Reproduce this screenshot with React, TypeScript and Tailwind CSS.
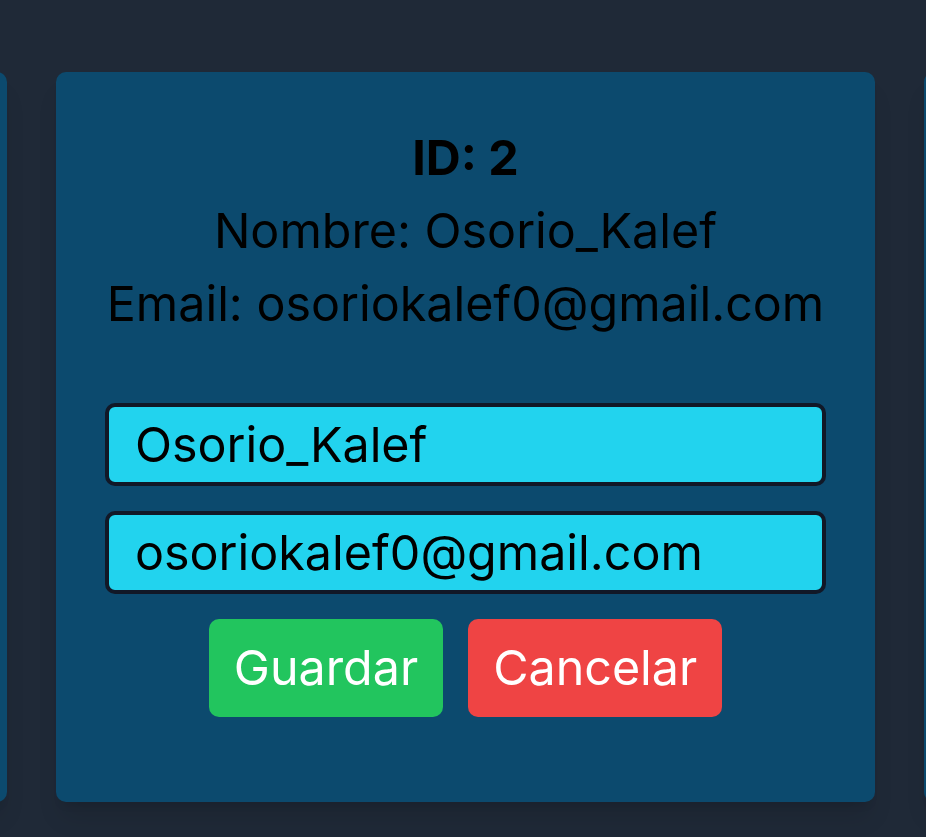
import React, { useState } from 'react';

interface User {
  id: number;
  nombre: string;
  email: string;
}

const users: User[] = [
  { id: 1, nombre: 'Perez_Ana', email: 'perezana1@gmail.com' },
  { id: 2, nombre: 'Osorio_Kalef', email: 'osoriokalef0@gmail.com' },
  { id: 3, nombre: 'Lopez_Marta', email: 'lopezmarta3@gmail.com' },
];

const UserCard: React.FC<{ user: User; editing?: boolean }> = ({ user, editing }) => {
  const [nombre, setNombre] = useState(user.nombre);
  const [email, setEmail] = useState(user.email);

  return (
    <div className="w-[819px] h-[730px] shrink-0 rounded-[10px] bg-[#0c4a6e] shadow-xl px-[49px] pt-[49px] text-center text-black">
      <p className="whitespace-nowrap text-[48.4px] leading-[73px] font-bold">ID: {user.id}</p>
      <p className="whitespace-nowrap text-[48.4px] leading-[73px]">Nombre: {user.nombre}</p>
      <p className="whitespace-nowrap text-[48.4px] leading-[73px]">Email: {user.email}</p>
      {editing && (
        <div className="mt-[63px] flex flex-col gap-[25px]">
          <input
            value={nombre}
            onChange={e => setNombre(e.target.value)}
            className="h-[83px] w-full rounded-[10px] border-[4px] border-[#111827] bg-[#22d3ee] px-[26px] text-[48.4px] text-black outline-none"
          />
          <input
            value={email}
            onChange={e => setEmail(e.target.value)}
            className="h-[83px] w-full rounded-[10px] border-[4px] border-[#111827] bg-[#22d3ee] px-[26px] text-[48.4px] text-black outline-none"
          />
          <div className="flex justify-center gap-[25px]">
            <button className="h-[98px] rounded-[10px] bg-[#22c55e] px-[25px] text-[48.4px] text-white">Guardar</button>
            <button className="h-[98px] rounded-[10px] bg-[#ef4444] px-[25px] text-[48.4px] text-white">Cancelar</button>
          </div>
        </div>
      )}
    </div>
  );
};

export default function App() {
  return (
    <div className="min-h-[837px] h-screen overflow-hidden bg-[#1f2937] pt-[72px] font-['Inter','Liberation_Sans',sans-serif]">
      <div className="flex justify-center gap-[49px] pl-[5px]">
        {users.map(u => (
          <UserCard key={u.id} user={u} editing={u.id === 2} />
        ))}
      </div>
    </div>
  );
}
